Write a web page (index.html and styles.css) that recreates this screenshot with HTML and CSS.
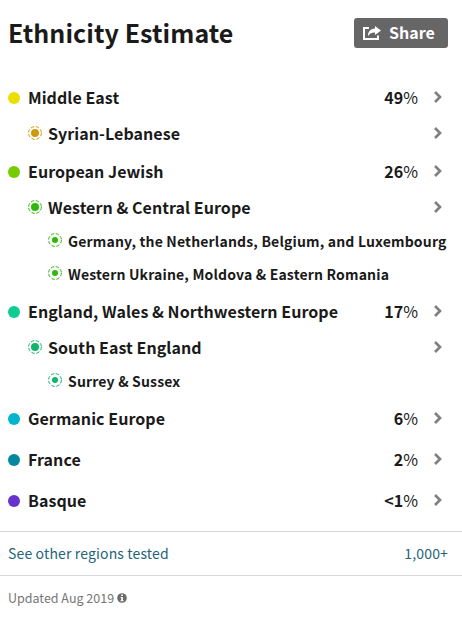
FILE: index.html
```
<!DOCTYPE html>
<html lang="en">
<head>
  <meta charset="UTF-8">
  <meta name="viewport" content="width=device-width, initial-scale=1.0">
  <title>Ethnicity Estimate</title>
  <link rel="stylesheet" href="styles.css">
</head>
<body>

  <svg width="0" height="0" class="defs">
    <symbol id="chevron" viewBox="0 0 10 14">
      <path d="M2 2 L7 7 L2 12" fill="none" stroke="#808080" stroke-width="2.7"/>
    </symbol>
    <symbol id="ring" viewBox="0 0 14 14">
      <circle cx="7" cy="7" r="6.4" fill="none" stroke="currentColor" stroke-width="1" stroke-dasharray="3.4 1.63"/>
      <circle cx="7" cy="7" r="4" fill="currentColor"/>
    </symbol>
    <symbol id="ringSmall" viewBox="0 0 14 14">
      <circle cx="7" cy="7" r="6.4" fill="none" stroke="currentColor" stroke-width="1" stroke-dasharray="3.4 1.63"/>
      <circle cx="7" cy="7" r="3" fill="currentColor"/>
    </symbol>
  </svg>

  <div class="header">
    <h1>Ethnicity Estimate</h1>
    <button class="share">
      <svg width="18" height="16" viewBox="0 0 18 16">
        <path d="M6 3 H1 V14 H15 V10.5" fill="none" stroke="#fff" stroke-width="2"/>
        <path d="M12 1 L18 5.5 L12 10 V7.4 C8.8 7.3 6.8 8.4 5 11 C5 6.6 7.6 3.9 12 3.6 Z" fill="#fff"/>
      </svg>
      <span>Share</span>
    </button>
  </div>

  <div class="regions">
    <div class="group">
      <div class="row"><i class="dot yellow"></i><span class="name">Middle East</span><span class="percent"><b>49</b>%</span><svg class="arrow"><use href="#chevron"/></svg></div>
      <div class="row sub"><svg class="ring gold"><use href="#ring"/></svg><span class="name">Syrian-Lebanese</span><svg class="arrow"><use href="#chevron"/></svg></div>
    </div>
    <div class="group">
      <div class="row"><i class="dot lime"></i><span class="name">European Jewish</span><span class="percent"><b>26</b>%</span><svg class="arrow"><use href="#chevron"/></svg></div>
      <div class="row sub"><svg class="ring green"><use href="#ring"/></svg><span class="name">Western &amp; Central Europe</span><svg class="arrow"><use href="#chevron"/></svg></div>
      <div class="row leaf"><svg class="ring green"><use href="#ringSmall"/></svg><span class="name">Germany, the Netherlands, Belgium, and Luxembourg</span></div>
      <div class="row leaf"><svg class="ring green"><use href="#ringSmall"/></svg><span class="name">Western Ukraine, Moldova &amp; Eastern Romania</span></div>
    </div>
    <div class="group">
      <div class="row"><i class="dot mint"></i><span class="name">England, Wales &amp; Northwestern Europe</span><span class="percent"><b>17</b>%</span><svg class="arrow"><use href="#chevron"/></svg></div>
      <div class="row sub"><svg class="ring emerald"><use href="#ring"/></svg><span class="name">South East England</span><svg class="arrow"><use href="#chevron"/></svg></div>
      <div class="row leaf"><svg class="ring emerald"><use href="#ringSmall"/></svg><span class="name">Surrey &amp; Sussex</span></div>
    </div>
    <div class="group">
      <div class="row"><i class="dot cyan"></i><span class="name">Germanic Europe</span><span class="percent"><b>6</b>%</span><svg class="arrow"><use href="#chevron"/></svg></div>
    </div>
    <div class="group">
      <div class="row"><i class="dot teal"></i><span class="name">France</span><span class="percent"><b>2</b>%</span><svg class="arrow"><use href="#chevron"/></svg></div>
    </div>
    <div class="group">
      <div class="row"><i class="dot purple"></i><span class="name">Basque</span><span class="percent"><b>&lt;1</b>%</span><svg class="arrow"><use href="#chevron"/></svg></div>
    </div>
  </div>

  <a class="other">
    <span>See other regions tested</span>
    <span>1,000+</span>
  </a>

  <div class="updated">
    <span>Updated Aug 2019</span>
    <svg width="10" height="10" viewBox="0 0 10 10">
      <circle cx="5" cy="5" r="4.8" fill="#6b6b6b"/>
      <path d="M4.2 1.6 H5.9 V3 H4.2 Z M3.6 4 H5.9 V7.2 H6.6 V8.2 H3.5 V7.2 H4.2 V5 H3.6 Z" fill="#fff"/>
    </svg>
  </div>

</body>
</html>
```
FILE: styles.css
```
body {
  margin: 0;
  background-color: #fff;
  color: #1a1a1a;
  font-family: "Noto Sans CJK SC", "Open Sans", sans-serif;
}

.defs {
  display: block;
}

.header {
  display: flex;
  justify-content: space-between;
  align-items: center;
  height: 30px;
  padding: 18px 14px 0 8px;
}

h1 {
  margin: 0;
  padding-bottom: 2px;
  font-size: 25px;
  line-height: 30px;
  letter-spacing: 0.06px;
  font-weight: bold;
  white-space: nowrap;
}

.share {
  display: flex;
  align-items: center;
  gap: 8px;
  width: 94px;
  height: 30px;
  padding: 0 0 0 9px;
  border: none;
  border-radius: 3px;
  background-color: #666;
  color: #fff;
  font-family: inherit;
  font-size: 16px;
  line-height: 28px;
  font-weight: bold;
}

.share span {
  padding-bottom: 2px;
}

.regions {
  padding: 29px 14px 10px 8px;
}

.group {
  margin-bottom: 2px;
}

.row {
  display: flex;
  align-items: center;
  height: 39px;
  font-size: 16px;
  line-height: 24px;
}

.name {
  flex: 1;
  font-weight: bold;
  letter-spacing: 0.05px;
  white-space: nowrap;
}

.sub {
  height: 33px;
  padding-left: 20px;
}

.leaf {
  height: 33px;
  padding-left: 40px;
  font-size: 14px;
}

.leaf .name {
  padding-top: 2px;
  letter-spacing: 0.17px;
}

.dot {
  width: 12px;
  height: 12px;
  margin: 2px 8px 0 0;
  border-radius: 50%;
}

.ring {
  width: 14px;
  height: 14px;
  margin-right: 6px;
}

.percent {
  font-weight: 400;
}

.arrow {
  width: 10px;
  height: 14px;
  margin: 0 5px 0 15px;
}

.yellow { background-color: #ebdf00; }
.lime { background-color: #76cc00; }
.mint { background-color: #0fcc91; }
.cyan { background-color: #00b5cc; }
.teal { background-color: #0587a0; }
.purple { background-color: #6633cc; }
.gold { color: #cc9a0c; }
.green { color: #2fb80c; }
.emerald { color: #12b36b; }

.other {
  display: flex;
  justify-content: space-between;
  padding: 0 14px 0 8px;
  border-top: 1px solid #d8d8d8;
  border-bottom: 1px solid #d8d8d8;
  color: #24647a;
  font-size: 14px;
  line-height: 43px;
  letter-spacing: 0.15px;
}

.updated {
  display: flex;
  align-items: center;
  gap: 3px;
  padding: 12px 8px;
  color: #767676;
  font-size: 12.5px;
  line-height: 20px;
}
```
